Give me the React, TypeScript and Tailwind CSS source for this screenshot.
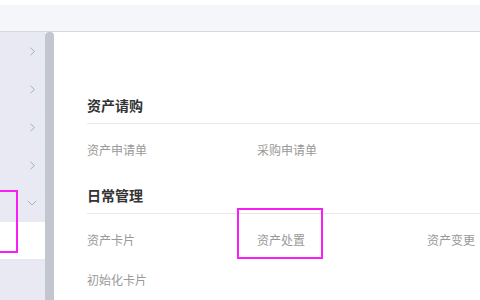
import React from 'react';

const font = { fontFamily: '"Noto Sans CJK SC", "Noto Sans", sans-serif' };

function ChevronRight() {
  return (
    <svg width="7" height="9" viewBox="0 0 7 9" fill="none">
      <polyline points="1.5,0.8 5.5,4.5 1.5,8.2" stroke="#a9adb9" strokeWidth="1" />
    </svg>
  );
}

function ChevronDown() {
  return (
    <svg width="10" height="6" viewBox="0 0 10 6" fill="none">
      <polyline points="0.8,0.8 5,5 9.2,0.8" stroke="#a9adb9" strokeWidth="1" />
    </svg>
  );
}

const sections = [
  { title: '资产请购', rows: [['资产申请单', '采购申请单']] },
  { title: '日常管理', rows: [['资产卡片', '资产处置', '资产变更'], ['初始化卡片']] },
];

export default function App() {
  return (
    <div className="relative w-[480px] h-[300px] overflow-hidden bg-white flex flex-col" style={font}>
      {/* top bar */}
      <div className="h-[5px] shrink-0 bg-white" />
      <div className="h-[27px] shrink-0 bg-[#f5f6fa] border-b border-[#d5d8de]" />

      <div className="flex flex-1 min-h-0">
        {/* sidebar */}
        <div className="w-[45px] shrink-0 bg-[#e9e9f3] flex flex-col">
          {[0, 1, 2, 3].map((i) => (
            <div key={i} className="h-[38px] flex items-center justify-end pr-[9px]">
              <ChevronRight />
            </div>
          ))}
          <div className="h-[38px] flex items-center justify-end pr-[8px]">
            <ChevronDown />
          </div>
          <div className="h-[37px] bg-white" />
        </div>

        {/* scrollbar */}
        <div className="w-[9px] shrink-0 bg-[#c2c6ce] rounded-t-[4px]" />

        {/* main */}
        <div className="flex-1 bg-white pt-[63px] pl-[33px]">
          {sections.map((s, si) => (
            <div key={s.title} className={si > 0 ? 'mt-[26px]' : ''}>
              <div className="h-[20px] leading-[20px] text-[14px] font-bold text-[#333]">{s.title}</div>
              <div className="mt-[8px] border-t border-[#e8e8e8]" />
              {s.rows.map((row, ri) => (
                <div key={ri} className={`flex ${ri === 0 ? 'mt-[17px]' : 'mt-[22px]'}`}>
                  {row.map((item) => (
                    <div key={item} className="w-[170px] shrink-0 h-[18px] leading-[18px] text-[12px] text-[#999]">
                      {item}
                    </div>
                  ))}
                </div>
              ))}
            </div>
          ))}
        </div>
      </div>

      {/* annotation boxes */}
      <div className="absolute left-[-3px] top-[190px] w-[21px] h-[63px] border-2 border-[#f61ff6]" />
      <div className="absolute left-[237px] top-[208px] w-[86px] h-[51px] border-2 border-[#f61ff6]" />
    </div>
  );
}
